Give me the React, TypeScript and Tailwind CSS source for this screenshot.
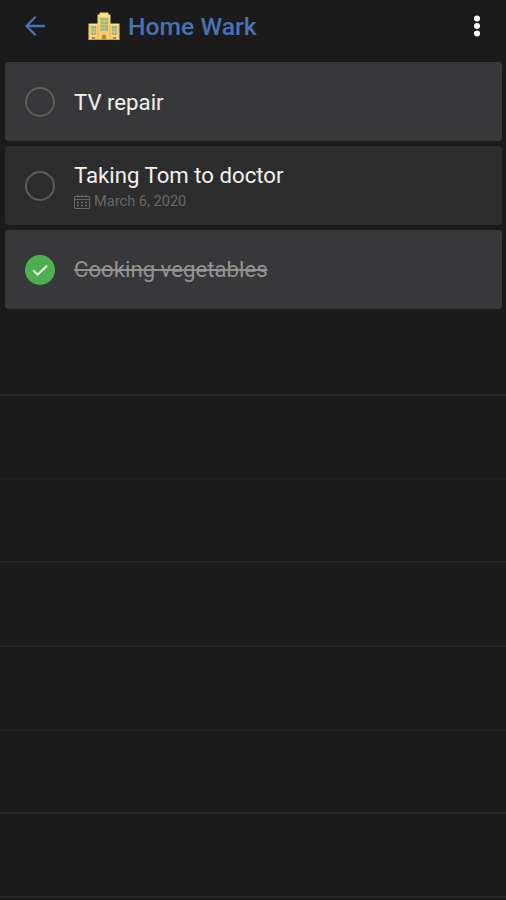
const todos = [
  { title: "TV repair", shade: "bg-[#38383a]", offset: "pt-px" },
  {
    title: "Taking Tom to doctor",
    date: "March 6, 2020",
    shade: "bg-[#2d2d2d]",
    offset: "pt-[4px]",
  },
  {
    title: "Cooking vegetables",
    done: true,
    shade: "bg-[#38383a]",
    offset: "pb-px",
  },
];

const emptyRows = [
  "h-[87px] border-b-2 border-[#262626]",
  "h-[84px] border-b-2 border-[#202022]",
  "h-[83px] border-b-2 border-[#262626]",
  "h-[84px] border-b-2 border-[#262626]",
  "h-[84px] border-b-2 border-[#202022]",
  "h-[83px] border-b-2 border-[#262626]",
  "h-[84px] border-b-2 border-[#262626]",
];

function BackArrow() {
  return (
    <svg
      className="ml-[25px] h-5 w-5"
      viewBox="0 0 20 20"
      fill="none"
      stroke="#4a72b0"
      strokeWidth="2.300"
    >
      <path d="M20 10H2M10.600 0.800L1.500 10l9.100 9.200" />
    </svg>
  );
}

function BuildingIcon() {
  return (
    <svg className="ml-[43px] h-7 w-8" viewBox="0 0 32 28">
      <path d="M0.500 11.500H9.500V2.500h2V0.500h9v2h2v9h9V28H0.500z" fill="#f6d070" />
      <path d="M10 3.500h2V1.500h8v2h2v1H10zM1 12h8.500v1H1zM22.500 12h8v1h-8z" fill="#fce38a" />
      <path d="M9.500 13h1v14h-1zM21.500 13h1v14h-1z" fill="#e3b45a" />
      <path d="M3 14h5v9H3zM12.500 6h7.500v13h-7.500zM24 14h5v9h-5z" fill="#9bb588" />
      <path
        d="M3 17h5M3 20h5M12.500 9h7.500M12.500 12.500h7.500M12.500 16h7.500M24 17h5M24 20h5"
        stroke="#e6d080"
        strokeWidth="0.800"
      />
      <path d="M5.500 14v9M16.200 6v13M26.500 14v9" stroke="#d3c878" strokeWidth="0.800" />
      <path d="M4 25h3v3H4zM14 28v-4l2-2 2 2v4zM25 25h3v3h-3z" fill="#c9763c" />
      <path d="M0.500 27H31.500v1H0.500z" fill="#dc9a48" />
    </svg>
  );
}

function CalendarIcon() {
  return (
    <svg
      className="h-[15px] w-4"
      viewBox="0 0 16 15"
      fill="none"
      stroke="#686868"
    >
      <rect x="0.500" y="2.500" width="15" height="12" rx="0.500" />
      <path d="M0.500 5.500h15M4 0.500v3M8 0.500v3M12 0.500v3" />
      <path d="M3 8.500h10M3 11.500h10" strokeWidth="1.300" strokeDasharray="2 2" />
    </svg>
  );
}

function CheckCircle({ done }: { done?: boolean }) {
  if (!done) {
    return (
      <span className="h-[30px] w-[30px] shrink-0 rounded-full border-2 border-[#5c5c5c]" />
    );
  }
  return (
    <svg className="h-[30px] w-[30px] shrink-0" viewBox="0 0 30 30">
      <circle cx="15" cy="15" r="15" fill="#4caf50" />
      <path
        d="M8.300 15.300l4.300 4.300L22 10.700"
        fill="none"
        stroke="#f5fff5"
        strokeWidth="1.900"
      />
    </svg>
  );
}

export default function App() {
  return (
    <main className="h-[900px] w-full overflow-hidden bg-[#1b1b1b] font-['Roboto',sans-serif]">
      <header className="flex h-[62px] items-center pb-[11px]">
        <BackArrow />
        <BuildingIcon />
        <h1 className="ml-2 pt-[2px] text-[24.700px] leading-[30px] font-medium whitespace-nowrap text-[#4a72b0]">
          Home Wark
        </h1>
        <svg
          className="mr-[25px] ml-auto h-[22px] w-2"
          viewBox="0 0 8 22"
          fill="#fff"
        >
          <circle cx="4" cy="3.500" r="3" />
          <circle cx="4" cy="11" r="3" />
          <circle cx="4" cy="18.500" r="3" />
        </svg>
      </header>
      <ul className="flex flex-col gap-[5px] pr-1 pl-[5px]">
        {todos.map(({ title, date, done, shade, offset }) => (
          <li
            key={title}
            className={`flex h-[79px] items-center rounded-[4px] pl-5 ${shade}`}
          >
            <CheckCircle done={done} />
            <div className={`ml-[19px] ${offset}`}>
              <p
                className={`text-[22.200px] leading-[26px] whitespace-nowrap ${done ? "text-[#929292] line-through" : "text-[#f2f2f2]"}`}
              >
                {title}
              </p>
              {date && (
                <div className="mt-px flex items-center gap-1 text-[14.600px] leading-[24px] text-[#686868]">
                  <CalendarIcon />
                  <span>{date}</span>
                </div>
              )}
            </div>
          </li>
        ))}
      </ul>
      <div>
        {emptyRows.map((row, i) => (
          <div key={i} className={row} />
        ))}
      </div>
    </main>
  );
}
